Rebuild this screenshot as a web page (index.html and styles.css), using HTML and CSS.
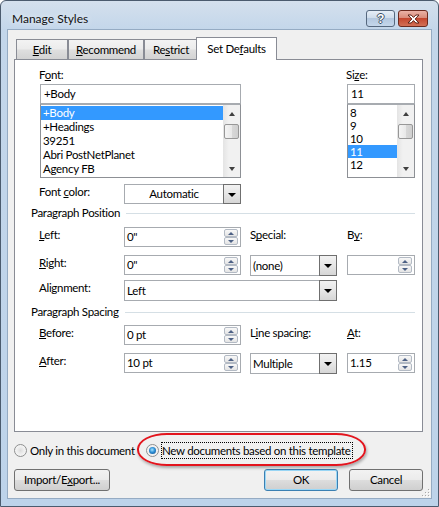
FILE: index.html
```html
<!DOCTYPE html>
<html lang="en">
<head>
    <meta charset="UTF-8">
    <meta name="viewport" content="width=device-width, initial-scale=1.0">
    <title>Manage Styles</title>
    <link rel="stylesheet" href="styles.css">
</head>
<body>
    <div class="window">
        <div class="titlebar">
            <div class="title">Manage Styles</div>
            <div class="caption">
                <div class="cap-btn help">?</div>
                <div class="cap-btn close">
                    <svg width="13" height="10" viewBox="0 0 13 10">
                        <path d="M1 1h3.2l2.3 2.4L8.8 1H12L8.2 5 12 9H8.8L6.5 6.6 4.2 9H1l3.8-4z" fill="#fff" stroke="#5a2318" stroke-width="1" stroke-linejoin="round"/>
                    </svg>
                </div>
            </div>
        </div>

        <div class="client">
            <div class="tabs">
                <div class="tab tab-edit"><u>E</u>dit</div>
                <div class="tab tab-recommend"><u>R</u>ecommend</div>
                <div class="tab tab-restrict">Re<u>s</u>trict</div>
                <div class="tab tab-defaults active">Set De<u>f</u>aults</div>
            </div>

            <div class="panel">
                <div class="font-pick">
                    <div class="pick">
                        <div class="pick-label">F<u>o</u>nt:</div>
                        <div class="textbox">+Body</div>
                        <div class="listbox">
                            <ul class="items">
                                <li class="sel">+Body</li>
                                <li>+Headings</li>
                                <li>39251</li>
                                <li>Abri PostNetPlanet</li>
                                <li>Agency FB</li>
                            </ul>
                            <div class="vscroll">
                                <span class="sb-arrow up"></span>
                                <span class="thumb"></span>
                                <span class="sb-arrow down"></span>
                            </div>
                        </div>
                    </div>
                    <div class="pick">
                        <div class="pick-label">Si<u>z</u>e:</div>
                        <div class="textbox">11</div>
                        <div class="listbox sizes">
                            <ul class="items">
                                <li>8</li>
                                <li>9</li>
                                <li>10</li>
                                <li class="sel">11</li>
                                <li>12</li>
                            </ul>
                            <div class="vscroll">
                                <span class="sb-arrow up"></span>
                                <span class="thumb"></span>
                                <span class="sb-arrow down"></span>
                            </div>
                        </div>
                    </div>
                </div>

                <div class="row row-color">
                    <div class="label">Font <u>c</u>olor:</div>
                    <div class="combo small centered"><span class="val">Automatic</span><span class="drop"></span></div>
                </div>

                <div class="group">Paragraph Position</div>

                <div class="row row-left">
                    <div class="label"><u>L</u>eft:</div>
                    <div class="textbox spinbox"><span class="val">0"</span><span class="spin"><i class="up"></i><i class="down"></i></span></div>
                    <div class="label">S<u>p</u>ecial:</div>
                    <div class="label">B<u>y</u>:</div>
                </div>

                <div class="row row-right">
                    <div class="label"><u>R</u>ight:</div>
                    <div class="textbox spinbox"><span class="val">0"</span><span class="spin"><i class="up"></i><i class="down"></i></span></div>
                    <div class="combo"><span class="val">(none)</span><span class="drop"></span></div>
                    <div class="textbox spinbox by"><span class="val"></span><span class="spin"><i class="up"></i><i class="down"></i></span></div>
                </div>

                <div class="row row-align">
                    <div class="label">Alignment:</div>
                    <div class="combo wide"><span class="val">Left</span><span class="drop"></span></div>
                </div>

                <div class="group group-spacing">Paragraph Spacing</div>

                <div class="row row-before">
                    <div class="label"><u>B</u>efore:</div>
                    <div class="textbox spinbox"><span class="val">0 pt</span><span class="spin"><i class="up"></i><i class="down"></i></span></div>
                    <div class="label">L<u>i</u>ne spacing:</div>
                    <div class="label"><u>A</u>t:</div>
                </div>

                <div class="row row-after">
                    <div class="label"><u>A</u>fter:</div>
                    <div class="textbox spinbox"><span class="val">10 pt</span><span class="spin"><i class="up"></i><i class="down"></i></span></div>
                    <div class="combo"><span class="val">Multiple</span><span class="drop"></span></div>
                    <div class="textbox spinbox by"><span class="val">1.15</span><span class="spin"><i class="up"></i><i class="down"></i></span></div>
                </div>
            </div>

            <div class="scope">
                <div class="opt"><span class="radio"></span><span class="opt-text">Only in this document</span></div>
                <div class="opt current">
                    <span class="radio checked"></span>
                    <span class="opt-text focus">New documents based on this template</span>
                    <span class="ring"></span>
                </div>
            </div>

            <div class="actions">
                <div class="btn btn-import">Import/E<u>x</u>port...</div>
                <div class="btn btn-ok default">OK</div>
                <div class="btn btn-cancel">Cancel</div>
            </div>

            <svg class="grip" width="10" height="10" viewBox="0 0 10 10">
                <g fill="#fff">
                    <rect x="9" y="3" width="1" height="1"/><rect x="6" y="6" width="1" height="1"/><rect x="9" y="6" width="1" height="1"/>
                    <rect x="3" y="9" width="1" height="1"/><rect x="6" y="9" width="1" height="1"/><rect x="9" y="9" width="1" height="1"/>
                </g>
                <g fill="#a8a8a8">
                    <rect x="8" y="2" width="1" height="1"/><rect x="5" y="5" width="1" height="1"/><rect x="8" y="5" width="1" height="1"/>
                    <rect x="2" y="8" width="1" height="1"/><rect x="5" y="8" width="1" height="1"/><rect x="8" y="8" width="1" height="1"/>
                </g>
            </svg>
        </div>
    </div>
</body>
</html>
```

FILE: styles.css
```css
* {
    box-sizing: border-box;
}

body {
    margin: 0;
    background: #ffffff;
    font-family: 'Lato', 'Liberation Sans', sans-serif;
    font-size: 11.5px;
    letter-spacing: -0.3px;
    color: #000;
}

u {
    text-decoration: underline;
    text-underline-offset: 1px;
    text-decoration-skip-ink: none;
}

/* window frame */
.window {
    width: 439px;
    height: 507px;
    border: 1px solid #4b5b6e;
    border-radius: 6px 6px 0 0;
    background: linear-gradient(to bottom, #d4e0ed 0, #c3d6ea 29px, #bdd3ea 100%);
    padding: 0 7px 8px;
    display: flex;
    flex-direction: column;
}

.titlebar {
    height: 29px;
    display: flex;
    justify-content: space-between;
    align-items: flex-start;
}

.title {
    margin: 10px 0 0 4px;
    line-height: 16px;
    font-size: 12px;
    letter-spacing: 0;
    color: #111;
    text-shadow: 0 0 6px rgba(255, 255, 255, 0.9);
}

.caption {
    display: flex;
    gap: 3px;
    margin: 9px 3px 0 0;
}

.cap-btn {
    height: 17px;
    border: 1px solid #56687e;
    border-radius: 3px;
    display: flex;
    align-items: center;
    justify-content: center;
}

.help {
    width: 29px;
    background: linear-gradient(to bottom, #e6eef7 0, #cddbea 50%, #b4c8df 50%, #c5d7eb 100%);
    color: #fff;
    font-weight: bold;
    font-size: 12px;
    font-family: 'Liberation Sans', sans-serif;
    text-shadow: 1px 0 0 #3d4f66, -1px 0 0 #3d4f66, 0 1px 0 #3d4f66, 0 -1px 0 #3d4f66;
}

.close {
    width: 30px;
    border-color: #6b2a1f;
    background: linear-gradient(to bottom, #eab2a6 0, #d98c7b 45%, #c4472f 50%, #d27056 100%);
}

/* client area */
.client {
    position: relative;
    flex: 1;
    background: #f0f0f0;
    padding: 0 8px 0 6px;
    display: flex;
    flex-direction: column;
    box-shadow: 0 0 0 1px #95abc3;
}

.tabs {
    display: flex;
    align-items: flex-end;
    height: 22px;
    margin-top: 7px;
    padding-left: 2px;
}

.tab {
    height: 20px;
    border: 1px solid #898c95;
    border-bottom: none;
    background: linear-gradient(to bottom, #f3f3f3 0, #ececec 45%, #dedede 55%, #d3d3d3 100%);
    text-align: center;
    line-height: 19px;
}

.tab-edit { width: 52px; }
.tab-recommend { width: 76px; }
.tab-restrict { width: 54px; }

.tab.active {
    width: 81px;
    height: 23px;
    margin: 0 0 -1px -2px;
    background: #fff;
    position: relative;
    z-index: 1;
    line-height: 21px;
}

.panel {
    height: 373px;
    border: 1px solid #898c95;
    background: #fff;
    padding-top: 8px;
}

/* font and size pickers */
.font-pick {
    display: grid;
    grid-template-columns: 201px 68px;
    column-gap: 106px;
    padding-left: 25px;
}

.pick-label {
    height: 14px;
    line-height: 14px;
    margin: 0 0 2px -1px;
}

.textbox {
    height: 20px;
    border: 1px solid #a7abb0;
    background: #fff;
    line-height: 18px;
    padding-left: 3px;
}

.listbox {
    height: 74px;
    border: 1px solid #8d9095;
    border-top-color: #a7abb0;
    display: flex;
}

.items {
    flex: 1;
    list-style: none;
    margin: 0;
    padding: 1px 0 0;
}

.items li {
    height: 14px;
    line-height: 14px;
    padding-left: 2px;
    white-space: nowrap;
}

.sizes .items li {
    height: 13px;
    line-height: 13px;
}

.items li.sel {
    background: #3399ff;
    color: #fff;
}

.vscroll {
    width: 17px;
    display: flex;
    flex-direction: column;
    align-items: center;
    background: linear-gradient(to right, #e4e4e4 0, #f1f1f1 35%, #f1f1f1 100%);
}

.sb-arrow {
    height: 17px;
    width: 17px;
    display: flex;
    align-items: center;
    justify-content: center;
}

.sb-arrow.down {
    margin-top: auto;
}

.sb-arrow::after {
    content: "";
    border-left: 3.5px solid transparent;
    border-right: 3.5px solid transparent;
}

.sb-arrow.up::after {
    border-bottom: 4px solid #404040;
}

.sb-arrow.down::after {
    border-top: 4px solid #404040;
}

.thumb {
    width: 15px;
    height: 15px;
    margin-top: 2px;
    border: 1px solid #979797;
    border-radius: 2px;
    background: linear-gradient(to right, #f4f4f4 0, #e9e9e9 50%, #d8d8d8 51%, #cfcfcf 100%);
}

/* form rows */
.row {
    display: grid;
    grid-template-columns: 85px 126px 97px 68px;
    align-items: start;
    padding-left: 24px;
}

.label {
    line-height: 16px;
    white-space: nowrap;
}

.row-color { margin-top: 6px; }
.row-left { margin-top: 7px; }
.row-right { margin-top: 8px; }
.row-align { margin-top: 4px; }
.row-before { margin-top: 6px; }
.row-after { margin-top: 8px; }

.row .textbox {
    width: 117px;
}

.row .textbox.by {
    width: 68px;
}

.spinbox {
    display: flex;
    padding-left: 2px;
}

.spinbox .val {
    flex: 1;
}

.spin {
    width: 14px;
    height: 16px;
    margin: 1px 2px 0 0;
    display: flex;
    flex-direction: column;
}

.spin i {
    flex: 1;
    border: 1px solid #b3bac4;
    border-radius: 2px;
    background: linear-gradient(to bottom, #f8f8f8, #e4e4e4);
    display: flex;
    align-items: center;
    justify-content: center;
}

.spin i::after {
    content: "";
    border-left: 3px solid transparent;
    border-right: 3px solid transparent;
}

.spin .up::after {
    border-bottom: 3px solid #4d6185;
}

.spin .down::after {
    border-top: 3px solid #4d6185;
}

.combo {
    width: 87px;
    height: 21px;
    border: 1px solid #a7abb0;
    background: #fff;
    display: flex;
}

.combo.small {
    width: 117px;
    height: 20px;
}

.combo.wide {
    grid-column: 2 / 4;
    width: 213px;
}

.combo .val {
    flex: 1;
    line-height: 19px;
    padding-left: 2px;
}

.combo.small .val {
    line-height: 18px;
}

.combo.centered .val {
    text-align: center;
    padding-left: 0;
}

.drop {
    width: 18px;
    margin: -1px -1px -1px 0;
    border: 1px solid #6f6f6f;
    background: linear-gradient(to bottom, #f2f2f2 0, #e6e6e6 50%, #d6d6d6 100%);
    display: flex;
    align-items: center;
    justify-content: center;
}

.drop::after {
    content: "";
    border-left: 4px solid transparent;
    border-right: 4px solid transparent;
    border-top: 4px solid #000;
    margin-top: 1px;
}

.group {
    display: flex;
    align-items: center;
    height: 14px;
    line-height: 14px;
    margin-top: 2px;
    padding: 0 7px 0 16px;
    white-space: nowrap;
}

.group-spacing {
    margin-top: 4px;
}

.group::after {
    content: "";
    flex: 1;
    height: 1px;
    margin-left: 6px;
    background: #d5dfe5;
}

/* bottom radios and buttons */
.scope {
    display: grid;
    grid-template-columns: 132px auto;
    align-items: center;
    height: 20px;
    margin-top: 8px;
}

.opt {
    display: flex;
    align-items: center;
    gap: 3px;
}

.opt.current {
    position: relative;
    justify-self: start;
}

.radio {
    width: 13px;
    height: 13px;
    flex: none;
    border: 1px solid #8e8f8f;
    border-radius: 50%;
    background: radial-gradient(circle at 50% 50%, #dcdcdc 0, #eeeeee 45%, #fbfbfb 100%);
    display: flex;
    align-items: center;
    justify-content: center;
}

.radio.checked::after {
    content: "";
    width: 7px;
    height: 7px;
    border-radius: 50%;
    background: radial-gradient(circle at 45% 40%, #a7e6ff 0, #2e8fd6 45%, #0c4a86 100%);
}

.opt-text {
    line-height: 15px;
    white-space: nowrap;
}

.opt-text.focus {
    border: 1px dotted #000;
    padding: 0 1px 0 0;
    margin-left: -1px;
}

.ring {
    position: absolute;
    left: -9px;
    top: -9px;
    right: -13px;
    bottom: -7px;
    border: 2px solid #e3141d;
    border-radius: 30px / 16px;
    box-shadow: 1px 2px 3px rgba(0, 0, 0, 0.3);
    pointer-events: none;
}

.actions {
    display: flex;
    margin-top: 9px;
}

.btn {
    height: 22px;
    border: 1px solid #707070;
    border-radius: 3px;
    background: linear-gradient(to bottom, #f2f2f2 0, #ebebeb 50%, #dddddd 50%, #cfcfcf 100%);
    text-align: center;
    line-height: 20px;
}

.btn-import { width: 96px; }

.btn-ok {
    width: 74px;
    margin-left: auto;
}

.btn-cancel {
    width: 74px;
    margin-left: 11px;
}

.btn.default {
    border-color: #3c7fb1;
    box-shadow: inset 0 0 0 1px #9ad8f7;
}

.grip {
    position: absolute;
    right: 1px;
    bottom: 1px;
}
```
